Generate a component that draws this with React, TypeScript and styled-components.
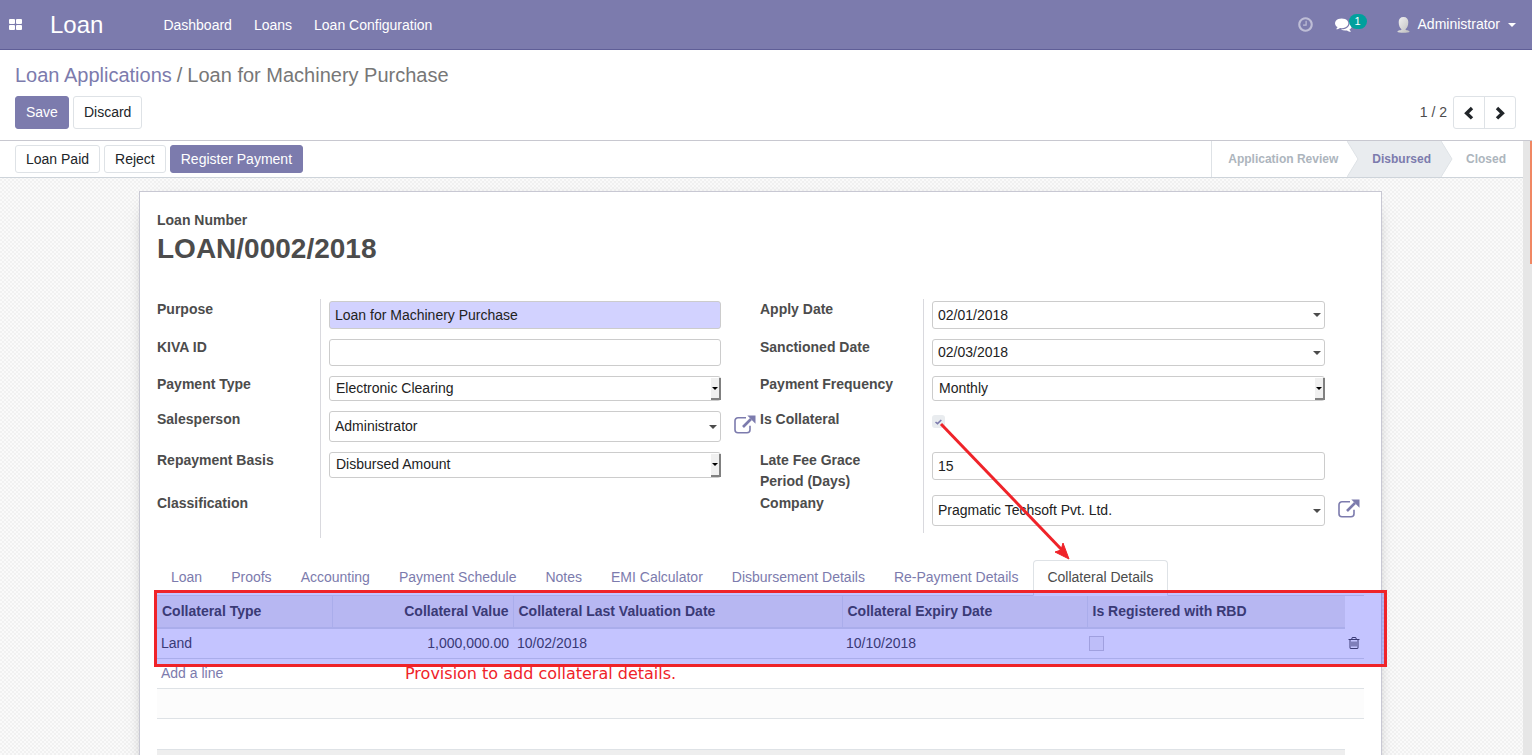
import React from "react";
import styled, { createGlobalStyle, css } from "styled-components";

const brand = "#7c7bad";
const ink = "#4c4c4c";
const line = "#dee2e6";
const control = "#ced4da";
const mark = "#ef2329";

const GlobalStyle = createGlobalStyle`
  *, *::before, *::after { box-sizing: border-box; }
  html, body, #root { height: 100%; }
  body {
    margin: 0;
    overflow: hidden;
    background: #fff;
    color: ${ink};
    font-family: "Liberation Sans", Arial, sans-serif;
    font-size: 14px;
    line-height: 21px;
  }
  button, input, select { font: inherit; color: inherit; margin: 0; }
  a { text-decoration: none; color: ${brand}; }
`;

const Page = styled.div`
  display: flex;
  flex-direction: column;
  height: 100vh;
`;

/* Navigation */
const Navbar = styled.header`
  display: flex;
  align-items: center;
  flex: none;
  height: 50px;
  padding: 0 16px 0 9px;
  background: ${brand};
  border-bottom: 1px solid #5f5e97;
  color: #fff;
`;

const IconButton = styled.button`
  display: flex;
  align-items: center;
  padding: 0;
  border: 0;
  background: none;
  color: inherit;
`;

const Brand = styled.a`
  margin: 0 60px 0 27px;
  color: #fff;
  font-size: 24px;
`;

const NavMenu = styled.nav`
  display: flex;
  flex: 1;
  gap: 22px;
  padding-top: 2px;
  a { color: #fff; }
`;

const Systray = styled.div`
  display: flex;
  align-items: center;
`;

const ClockTint = styled.span`
  display: flex;
  opacity: 0.5;
`;

const Messages = styled.button`
  display: flex;
  align-items: center;
  margin: 0 30px 0 21px;
  padding: 0;
  border: 0;
  background: none;
  color: #fff;
`;

const Badge = styled.span`
  margin: -6px 0 0 -3px;
  width: 18px;
  border-radius: 8px;
  background: #00a09d;
  font-size: 11px;
  line-height: 15px;
  text-align: center;
`;

const UserButton = styled(IconButton)`
  gap: 8px;
`;

const Caret = styled.span<{ $color?: string }>`
  width: 0;
  height: 0;
  border: 4px solid transparent;
  border-top-color: ${(p) => p.$color ?? ink};
  border-bottom: 0;
`;

/* Control panel */
const ControlPanel = styled.section`
  flex: none;
  padding: 12px 16px 11px 15px;
  border-bottom: 1px solid #c8c8d0;
`;

const Breadcrumb = styled.nav`
  margin-bottom: 8px;
  color: #777;
  font-size: 20px;
  line-height: 26px;
`;

const Slash = styled.span`
  padding: 0 5px;
`;

const PanelRow = styled.div`
  display: flex;
  justify-content: space-between;
  align-items: center;
`;

const ButtonGroup = styled.div`
  display: flex;
  gap: 4px;
`;

const Button = styled.button<{ $primary?: boolean; $small?: boolean }>`
  height: ${(p) => (p.$small ? 28 : 33)}px;
  padding: 0 10px;
  border: 1px solid ${(p) => (p.$primary ? brand : line)};
  border-radius: 3px;
  background: ${(p) => (p.$primary ? brand : "#fff")};
  color: ${(p) => (p.$primary ? "#fff" : "#212529")};
`;

const Pager = styled.div`
  display: flex;
  align-items: center;
  gap: 6px;
`;

const PagerButtons = styled.div`
  display: flex;
  border: 1px solid ${line};
  border-radius: 3px;
`;

const PagerButton = styled.button`
  display: flex;
  align-items: center;
  justify-content: center;
  width: 30px;
  height: 31px;
  padding: 0;
  border: 0;
  background: none;
  color: #212529;
  & + & { border-left: 1px solid ${line}; width: 31px; }
`;

/* Scrolling body */
const Body = styled.div`
  display: flex;
  flex: 1;
  min-height: 0;
`;

const Content = styled.main`
  display: flex;
  flex-direction: column;
  flex: 1;
  min-width: 0;
  overflow: hidden;
  background-color: #f5f5f5;
  background-image: repeating-conic-gradient(#f1f1f1 0 25%, #fafafa 0 50%);
  background-size: 4px 4px;
`;

const ScrollTrack = styled.div`
  display: flex;
  justify-content: flex-end;
  flex: none;
  width: 9px;
  background: #e6e6e6;
`;

const ScrollThumb = styled.div`
  width: 2px;
  height: 20%;
  background: #f08763;
`;

const StatusBar = styled.div`
  display: flex;
  justify-content: space-between;
  flex: none;
  height: 37px;
  padding-left: 15px;
  background: #fff;
  border-bottom: 1px solid ${control};
`;

const StatusActions = styled(ButtonGroup)`
  padding-top: 4px;
`;

const Steps = styled.ol`
  display: flex;
  margin: 0;
  padding: 0;
  list-style: none;
  border-left: 1px solid ${line};
  color: #adb5bd;
  font-size: 12px;
  font-weight: bold;
  line-height: 36px;
`;

const Step = styled.li<{ $active?: boolean }>`
  display: flex;
  ${(p) =>
    p.$active
      ? css`background: #e9ecef; color: ${brand};`
      : css`padding: 0 17px 0 16px;`}
  &:first-child { padding-right: 9px; }
  &:last-child { padding-left: 13px; }
`;

const StepName = styled.span`
  padding: 0 10px 0 13px;
`;

const Sheet = styled.section`
  flex: none;
  margin: 13px 141px 0 139px;
  padding: 18px 17px 40px;
  background: #fff;
  border: 1px solid #c8c8d3;
  box-shadow: 0 5px 20px -15px #000;
`;

const TitleLabel = styled.div`
  font-weight: bold;
`;

const Title = styled.h1`
  margin: 0 0 33px;
  font-size: 28px;
  line-height: 35px;
`;

const Groups = styled.div`
  display: grid;
  grid-template-columns: 603fr 604fr;
  align-items: start;
`;

const Field = styled.div<{ $h: number }>`
  display: grid;
  grid-template-columns: 163px 1fr;
  height: ${(p) => p.$h}px;
`;

const Label = styled.label`
  padding-right: 24px;
  font-weight: bold;
`;

const Value = styled.div`
  display: flex;
  align-items: flex-start;
  padding: 2px 39px 0 8px;
  border-left: 1px solid #d9d9de;
`;

const ControlBox = styled.div`
  position: relative;
  flex: 1;
  min-width: 0;
  ${Caret} { position: absolute; right: 4px; top: 50%; margin-top: -2px; }
`;

const controlStyle = css<{ $h: number }>`
  display: block;
  width: 100%;
  height: ${(p) => p.$h}px;
  border: 1px solid #ccc;
  border-radius: 3px;
  background: #fff;
  color: #222;
  outline: 0;
`;

const Input = styled.input<{ $h: number; $required?: boolean }>`
  ${controlStyle}
  padding: 0 5px 1px;
  ${(p) => p.$required && css`background: #d2d2ff;`}
`;

const Select = styled.select<{ $h: number }>`
  ${controlStyle}
  appearance: none;
  padding: 0 6px 1px;
`;

const SelectArrow = styled.span`
  position: absolute;
  top: 2px;
  right: 0;
  bottom: 1px;
  display: flex;
  align-items: center;
  justify-content: center;
  width: 10px;
  border-right: 2px solid #808080;
  border-bottom: 2px solid #808080;
  background: #f0f0f0;
  pointer-events: none;
  &::after {
    content: "";
    border: 3px solid transparent;
    border-top-color: #000;
    border-bottom: 0;
  }
`;

const External = styled.button`
  display: flex;
  flex: none;
  margin: 4px -35px 0 13px;
  padding: 0;
  border: 0;
  background: none;
  color: ${brand};
`;

const CheckHolder = styled.div`
  position: relative;
  padding-top: 4px;
`;

const Checkbox = styled.input<{ $size: number; $framed?: boolean }>`
  appearance: none;
  display: block;
  width: ${(p) => p.$size}px;
  height: ${(p) => p.$size}px;
  border-radius: ${(p) => (p.$framed ? 0 : 3)}px;
  background: #e9ecef;
  ${(p) => p.$framed && css`background: #f8f8f8; border: 1px solid #d0d0d6;`}
`;

const Tick = styled.svg`
  position: absolute;
  left: 3px;
  top: 8px;
`;

const Arrow = styled.svg`
  position: absolute;
  left: 5px;
  top: 10px;
  z-index: 2;
  pointer-events: none;
`;

/* Notebook */
const Tabs = styled.div`
  display: flex;
  margin-top: 22px;
  border-bottom: 1px solid ${line};
`;

const Tab = styled.button<{ $active?: boolean }>`
  height: 36px;
  margin-bottom: -1px;
  padding: 0 14px 2px 13px;
  border: 1px solid transparent;
  border-radius: 4px 4px 0 0;
  background: none;
  color: ${brand};
  white-space: nowrap;
  ${(p) =>
    p.$active &&
    css`
      color: ${ink};
      background: #fff;
      border-color: ${line} ${line} #fff;
    `}
`;

const TabPanel = styled.div`
  position: relative;
`;

const Table = styled.table`
  width: 100%;
  border-collapse: collapse;
  table-layout: fixed;
`;

const Th = styled.th<{ $right?: boolean; $bare?: boolean }>`
  height: 32px;
  padding: 0 4px 0 5px;
  text-align: ${(p) => (p.$right ? "right" : "left")};
  white-space: nowrap;
  ${(p) =>
    !p.$bare &&
    css`
      background: #eee;
      border-bottom: 2px solid ${line};
      &:not(:first-child) { border-left: 1px solid ${line}; }
    `}
`;

const Td = styled.td<{ $right?: boolean; $tight?: boolean }>`
  height: 30px;
  padding: 0 ${(p) => (p.$tight ? 2 : 4)}px;
  text-align: ${(p) => (p.$right ? "right" : "left")};
  border-bottom: 1px solid ${line};
`;

const Striped = styled.tr`
  background: #fcfcfc;
`;

const Footer = styled.div`
  height: 32px;
  margin: 30px 19px 0 0;
  background: #eee;
  border-top: 1px solid ${line};
`;

const Highlight = styled.div`
  position: absolute;
  top: -6px;
  left: -3px;
  right: -23px;
  height: 77px;
  border: 3px solid ${mark};
  background: rgba(0, 0, 255, 0.23);
  pointer-events: none;
`;

const Note = styled.p`
  position: absolute;
  top: 67px;
  left: 248px;
  margin: 0;
  color: ${mark};
  font-family: "DejaVu Sans", sans-serif;
  font-size: 16px;
`;

const FA = ({ d, size }: { d: string; size: number }) => (
  <svg width={size} height={size} viewBox="0 0 1792 1792" fill="currentColor" aria-hidden="true">
    <path d={d} />
  </svg>
);

const clockPath =
  "M1024 544v448q0 14-9 23t-23 9h-320q-14 0-23-9t-9-23v-64q0-14 9-23t23-9h224v-352q0-14 9-23t23-9h64q14 0 23 9t9 23zm416 352q0-148-73-273t-198-198-273-73-273 73-198 198-73 273 73 273 198 198 273 73 273-73 198-198 73-273zm224 0q0 209-103 385.5t-279.5 279.5-385.5 103-385.5-103-279.5-279.5-103-385.5 103-385.5 279.5-279.5 385.5-103 385.5 103 279.5 279.5 103 385.5z";
const commentsPath =
  "M1408 768q0 139-94 257t-256.5 186.5-353.5 68.5q-86 0-176-16-124 88-278 128-36 9-86 16h-3q-11 0-20.5-8t-11.5-21q-1-3-1-6.5t.5-6.5 2-6l2.5-5 3.5-5.5 4-5 4.5-5 4-4.5q5-6 23-25t26-29.5 22.5-29 25-38.5 20.5-44q-124-72-195-177t-71-224q0-139 94-257t256.5-186.5 353.5-68.5 353.5 68.5 256.5 186.5 94 257zm384 256q0 120-71 224.5t-195 176.5q10 24 20.5 44t25 38.5 22.5 29 26 29.5 23 25q1 1 4 4.5t4.5 5 4 5 3.5 5.5l2.5 5 2 6 .5 6.5-1 6.5q-3 14-13 22t-22 7q-50-7-86-16-154-40-278-128-90 16-176 16-271 0-472-132 58 4 88 4 161 0 309-45t264-129q125-92 192-212t67-254q0-77-23-152 129 71 204 178t75 230z";
const trashPath =
  "M704 736v576q0 14-9 23t-23 9h-64q-14 0-23-9t-9-23v-576q0-14 9-23t23-9h64q14 0 23 9t9 23zm256 0v576q0 14-9 23t-23 9h-64q-14 0-23-9t-9-23v-576q0-14 9-23t23-9h64q14 0 23 9t9 23zm256 0v576q0 14-9 23t-23 9h-64q-14 0-23-9t-9-23v-576q0-14 9-23t23-9h64q14 0 23 9t9 23zm128 724v-948h-896v948q0 22 7 40.5t14.5 27 10.5 8.5h832q3 0 10.5-8.5t14.5-27 7-40.5zm-672-1076h448l-48-117q-7-9-17-11h-317q-10 2-17 11zm928 32v64q0 14-9 23t-23 9h-96v948q0 83-47 143.5t-113 60.5h-832q-66 0-113-58.5t-47-141.5v-952h-96q-14 0-23-9t-9-23v-64q0-14 9-23t23-9h309l70-167q15-37 54-63t79-26h320q40 0 79 26t54 63l70 167h309q14 0 23 9t9 23z";

const AppsIcon = () => (
  <svg width="14" height="12" viewBox="0 0 14 12" fill="currentColor" aria-hidden="true">
    <rect x="0" y="0" width="6" height="5" rx="1" />
    <rect x="7" y="0" width="6" height="5" rx="1" />
    <rect x="0" y="6" width="6" height="5" rx="1" />
    <rect x="7" y="6" width="6" height="5" rx="1" />
  </svg>
);

const AvatarIcon = () => (
  <svg width="13" height="16" viewBox="0 0 13 16" aria-hidden="true">
    <defs>
      <linearGradient id="avatar" x1="0" y1="0" x2="1" y2="1">
        <stop offset="0" stopColor="#f4f4f4" />
        <stop offset="1" stopColor="#bdbdbd" />
      </linearGradient>
    </defs>
    <path
      d="M6.5 0C3.300 0 1.700 2 1.700 5c0 3.500 1.100 6 2.800 7.200 0 1.200-3.500 0.800-4.200 2.600 1 1.400 11.400 1.400 12.400 0-0.700-1.800-4.200-1.400-4.200-2.600 1.700-1.200 2.800-3.700 2.800-7.200 0-3-1.600-5-4.800-5z"
      fill="url(#avatar)"
    />
  </svg>
);

const Chevron = ({ right }: { right?: boolean }) => (
  <svg width="12" height="14" viewBox="0 0 12 14" fill="none" stroke="currentColor" strokeWidth="3.400" aria-hidden="true">
    <path d={right ? "M3 2l5.400 5.200L3 12.400" : "M9 2L3.600 7.200 9 12.400"} />
  </svg>
);

const ExternalIcon = () => (
  <svg width="22" height="20" viewBox="0 0 22 20" fill="none" stroke="currentColor" aria-hidden="true">
    <path d="M12 2.800H4a3 3 0 0 0-3 3v9a3 3 0 0 0 3 3h9a3 3 0 0 0 3-3v-4" strokeWidth="1.600" />
    <path d="M9 12l8-8" strokeWidth="2.600" />
    <path d="M13.300 0.500h8.200v8.200z" fill="currentColor" stroke="none" />
  </svg>
);

const StepArrow = ({ fill, back }: { fill: string; back: string }) => (
  <svg width="12" height="36" viewBox="0 0 12 36" aria-hidden="true">
    <rect width="12" height="36" fill={back} />
    <path d="M0 0l11 18L0 36z" fill={fill} />
    <path d="M0 0l11 18L0 36" fill="none" stroke={line} />
  </svg>
);

type FieldProps = {
  id: string;
  label: string;
  row: number;
  h: number;
  value: string;
  required?: boolean;
  external?: boolean;
};

const TextField = ({ id, label, row, h, value, required }: FieldProps) => (
  <Field $h={row}>
    <Label htmlFor={id}>{label}</Label>
    <Value>
      <ControlBox>
        <Input id={id} $h={h} $required={required} defaultValue={value} />
      </ControlBox>
    </Value>
  </Field>
);

const SelectField = ({ id, label, row, h, value }: FieldProps) => (
  <Field $h={row}>
    <Label htmlFor={id}>{label}</Label>
    <Value>
      <ControlBox>
        <Select id={id} $h={h} defaultValue={value}>
          <option>{value}</option>
        </Select>
        <SelectArrow />
      </ControlBox>
    </Value>
  </Field>
);

const ComboField = ({ id, label, row, h, value, external }: FieldProps) => (
  <Field $h={row}>
    <Label htmlFor={id}>{label}</Label>
    <Value>
      <ControlBox>
        <Input id={id} $h={h} defaultValue={value} />
        <Caret />
      </ControlBox>
      {external && (
        <External aria-label={`Open ${label}`}>
          <ExternalIcon />
        </External>
      )}
    </Value>
  </Field>
);

const tabs = [
  "Loan",
  "Proofs",
  "Accounting",
  "Payment Schedule",
  "Notes",
  "EMI Calculator",
  "Disbursement Details",
  "Re-Payment Details",
  "Collateral Details",
];

export default function App() {
  return (
    <Page>
      <GlobalStyle />
      <Navbar>
        <IconButton aria-label="Applications">
          <AppsIcon />
        </IconButton>
        <Brand href="#">Loan</Brand>
        <NavMenu>
          <a href="#">Dashboard</a>
          <a href="#">Loans</a>
          <a href="#">Loan Configuration</a>
        </NavMenu>
        <Systray>
          <IconButton aria-label="Activities">
            <ClockTint>
              <FA d={clockPath} size={17} />
            </ClockTint>
          </IconButton>
          <Messages aria-label="Messages">
            <FA d={commentsPath} size={17} />
            <Badge>1</Badge>
          </Messages>
          <UserButton>
            <AvatarIcon />
            Administrator
            <Caret $color="#fff" />
          </UserButton>
        </Systray>
      </Navbar>

      <ControlPanel>
        <Breadcrumb>
          <a href="#">Loan Applications</a>
          <Slash>/</Slash>
          Loan for Machinery Purchase
        </Breadcrumb>
        <PanelRow>
          <ButtonGroup>
            <Button $primary>Save</Button>
            <Button>Discard</Button>
          </ButtonGroup>
          <Pager>
            <span>1 / 2</span>
            <PagerButtons>
              <PagerButton aria-label="Previous">
                <Chevron />
              </PagerButton>
              <PagerButton aria-label="Next">
                <Chevron right />
              </PagerButton>
            </PagerButtons>
          </Pager>
        </PanelRow>
      </ControlPanel>

      <Body>
        <Content>
          <StatusBar>
            <StatusActions>
              <Button $small>Loan Paid</Button>
              <Button $small>Reject</Button>
              <Button $small $primary>Register Payment</Button>
            </StatusActions>
            <Steps>
              <Step>Application Review</Step>
              <Step $active>
                <StepArrow fill="#fff" back="#e9ecef" />
                <StepName>Disbursed</StepName>
                <StepArrow fill="#e9ecef" back="#fff" />
              </Step>
              <Step>Closed</Step>
            </Steps>
          </StatusBar>

          <Sheet>
            <TitleLabel>Loan Number</TitleLabel>
            <Title>LOAN/0002/2018</Title>

            <Groups>
              <div>
                <TextField id="purpose" label="Purpose" row={38} h={28} value="Loan for Machinery Purchase" required />
                <TextField id="kiva" label="KIVA ID" row={37} h={27} value="" />
                <SelectField id="ptype" label="Payment Type" row={35} h={25} value="Electronic Clearing" />
                <ComboField id="sales" label="Salesperson" row={41} h={31} value="Administrator" external />
                <SelectField id="basis" label="Repayment Basis" row={43} h={26} value="Disbursed Amount" />
                <Field $h={45}>
                  <Label as="span">Classification</Label>
                  <Value />
                </Field>
              </div>
              <div>
                <ComboField id="apply" label="Apply Date" row={38} h={28} value="02/01/2018" />
                <ComboField id="sanction" label="Sanctioned Date" row={37} h={27} value="02/03/2018" />
                <SelectField id="freq" label="Payment Frequency" row={35} h={25} value="Monthly" />
                <Field $h={41}>
                  <Label htmlFor="collateral">Is Collateral</Label>
                  <Value>
                    <CheckHolder>
                      <Checkbox id="collateral" type="checkbox" $size={13} defaultChecked />
                      <Tick width="7" height="6" viewBox="0 0 7 6" fill="none" stroke={brand} strokeWidth="1.600" aria-hidden="true">
                        <path d="M0.500 3l2 1.600L6.300 1" />
                      </Tick>
                      <Arrow width="136" height="142" viewBox="0 0 136 142" aria-hidden="true">
                        <path d="M4 3l121 126" stroke={mark} strokeWidth="3" />
                        <path d="M132 138l-14-7 6-2 2-7z" fill={mark} stroke={mark} />
                      </Arrow>
                    </CheckHolder>
                  </Value>
                </Field>
                <TextField id="grace" label="Late Fee Grace Period (Days)" row={43} h={28} value="15" />
                <ComboField id="company" label="Company" row={40} h={31} value="Pragmatic Techsoft Pvt. Ltd." external />
              </div>
            </Groups>

            <Tabs role="tablist">
              {tabs.map((name, i) => (
                <Tab key={name} role="tab" $active={i === tabs.length - 1} aria-selected={i === tabs.length - 1}>
                  {name}
                </Tab>
              ))}
            </Tabs>
            <TabPanel role="tabpanel">
              <Table>
                <colgroup>
                  <col width="175" />
                  <col width="181" />
                  <col width="329" />
                  <col width="245" />
                  <col />
                  <col width="19" />
                </colgroup>
                <thead>
                  <tr>
                    <Th>Collateral Type</Th>
                    <Th $right>Collateral Value</Th>
                    <Th>Collateral Last Valuation Date</Th>
                    <Th>Collateral Expiry Date</Th>
                    <Th>Is Registered with RBD</Th>
                    <Th $bare aria-label="Actions" />
                  </tr>
                </thead>
                <tbody>
                  <tr>
                    <Td>Land</Td>
                    <Td $right>1,000,000.00</Td>
                    <Td>10/02/2018</Td>
                    <Td>10/10/2018</Td>
                    <Td $tight>
                      <Checkbox type="checkbox" $size={15} $framed aria-label="Is Registered with RBD" />
                    </Td>
                    <Td $tight>
                      <IconButton aria-label="Delete row">
                        <FA d={trashPath} size={14} />
                      </IconButton>
                    </Td>
                  </tr>
                  <tr>
                    <Td colSpan={6}>
                      <a href="#">Add a line</a>
                    </Td>
                  </tr>
                  <Striped>
                    <Td colSpan={6} />
                  </Striped>
                </tbody>
              </Table>
              <Highlight />
              <Note>Provision to add collateral details.</Note>
            </TabPanel>
            <Footer />
          </Sheet>
        </Content>
        <ScrollTrack>
          <ScrollThumb />
        </ScrollTrack>
      </Body>
    </Page>
  );
}
